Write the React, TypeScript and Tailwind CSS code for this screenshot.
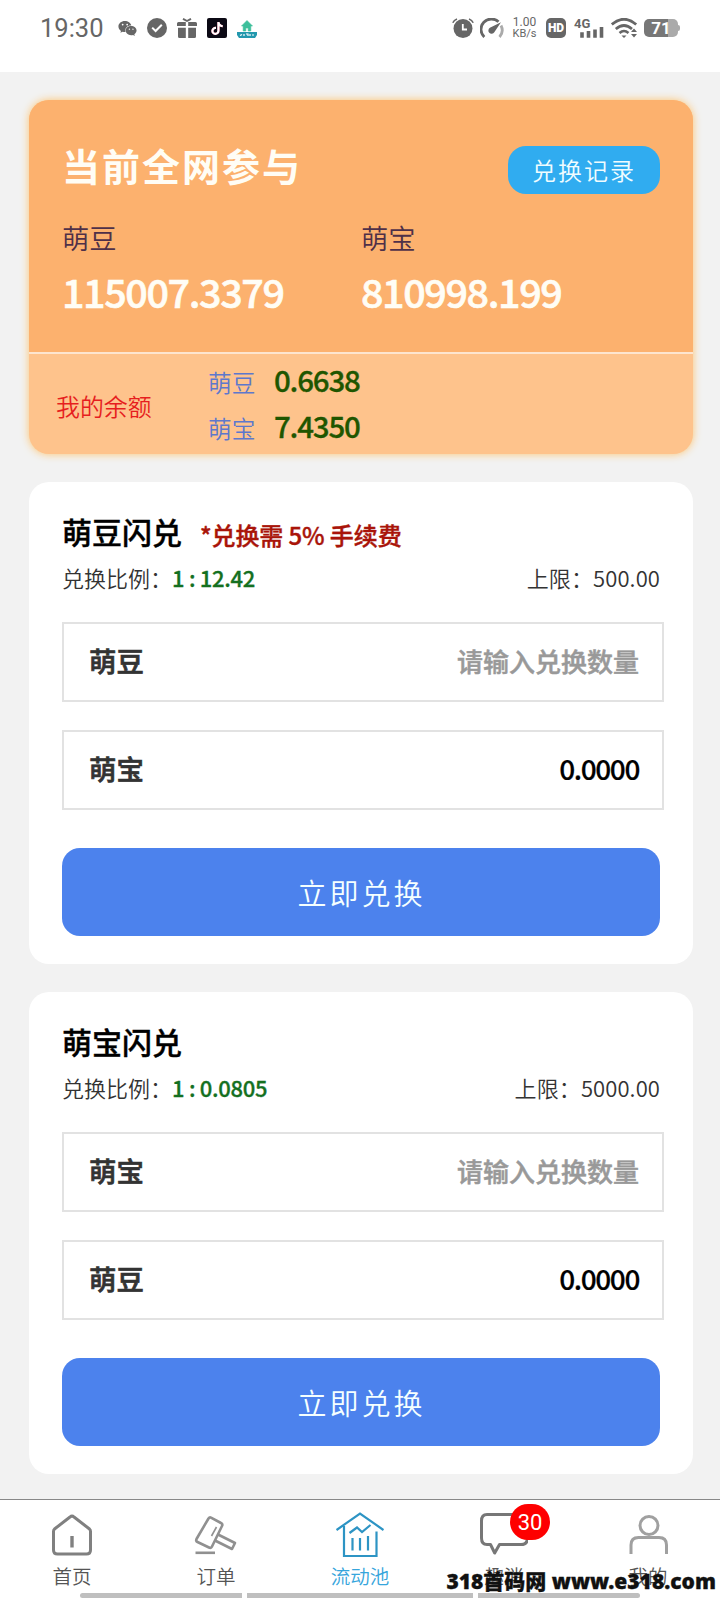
import { FaTiktok, FaWeixin } from "react-icons/fa";

type ExchangeProps = {
    title: string;
    notice?: string;
    ratio: string;
    limit: string;
    from: string;
    to: string;
};

const EXCHANGES: ExchangeProps[] = [
    { title: "萌豆闪兑", notice: "*兑换需 5% 手续费", ratio: "1 : 12.42", limit: "500.00", from: "萌豆", to: "萌宝" },
    { title: "萌宝闪兑", ratio: "1 : 0.0805", limit: "5000.00", from: "萌宝", to: "萌豆" },
];

function StatusBar() {
    return (
        <header className="flex h-[72px] items-start justify-between bg-white pt-[18px] pl-[39px] pr-[40px] text-[#666]">
            <div className="flex h-5 items-center">
                <span className="w-[79px] pl-px font-['Roboto'] text-[25.5px] leading-5">19:30</span>
                <FaWeixin className="h-[19px] w-[19px]" />
                <svg className="ml-[10px] h-5 w-5" viewBox="0 0 20 20">
                    <circle cx="10" cy="10" r="10" fill="#666" />
                    <path d="M5.2 9.6l3.4 3.4 6.2-6.2" fill="none" stroke="#fff" strokeWidth="2" />
                </svg>
                <svg className="ml-[10px] h-5 w-5" viewBox="0 0 20 20" fill="#666">
                    <path d="M0 5.5Q0 4 1.5 4h7.3v4H0zM11.2 4h7.3Q20 4 20 5.5V8h-8.8zM1 9.7h7.8V20H2.5Q1 20 1 18.5zM11.2 9.7H19v8.8q0 1.5-1.5 1.5h-6.3z" />
                    <path d="M6 .8L10 3l4-2.2" fill="none" stroke="#666" strokeWidth="1.9" />
                </svg>
                <span className="ml-[10px] flex h-5 w-5 items-center justify-center rounded-[2px] bg-[#0b0914]">
                    <FaTiktok className="h-[13px] w-[12px] text-white drop-shadow-[0.5px_0.5px_0_#e52f59]" />
                </span>
                <svg className="ml-[10px] h-5 w-5" viewBox="0 0 20 20">
                    <path d="M10 2.5L4.5 8h1.7v5h2.6v-3h2.4v3h2.6V8h1.7z" fill="#3dbf9b" stroke="#3dbf9b" strokeWidth=".6" />
                    <path d="M0 14h20v3l-2 3H2l-2-3z" fill="#2398ae" />
                    <path d="M3 17.5l2-1m2 1.5v-2m2 0h2v2m2-2v2m2-1h2" stroke="#fff" strokeWidth="1.2" fill="none" />
                </svg>
            </div>
            <div className="flex h-5 items-center">
                <svg className="h-5 w-[22px]" viewBox="0 0 22 20">
                    <circle cx="11" cy="10.5" r="9.5" fill="#666" />
                    <path d="M10.8 6v5.5H15" fill="none" stroke="#fff" strokeWidth="1.8" />
                    <path d="M.8 4.8Q2 2 5 .9M21.2 4.8Q20 2 17 .9" fill="none" stroke="#666" strokeWidth="1.6" />
                </svg>
                <svg className="ml-[6px] h-5 w-6" viewBox="0 0 24 20" fill="none">
                    <path d="M4.3 19A10.3 10.3 0 0 1 18.5 3.8" stroke="#666" strokeWidth="2.8" />
                    <path d="M21 7.5A10.3 10.3 0 0 1 19.5 19" stroke="#aaa" strokeWidth="2.8" />
                    <path d="M21 4.2L14.3 14.2a3.2 3.2 0 1 1-4.4-4.4z" fill="#666" />
                </svg>
                <span className="ml-[8px] flex w-[25px] flex-col items-center font-['Roboto'] text-[12px] leading-[11px]">
                    <span>1.00</span>
                    <span className="text-[11px]">KB/s</span>
                </span>
                <span className="ml-[9px] flex h-5 w-5 items-center justify-center rounded-[5px] bg-[#666] font-['Roboto'] text-[12px] font-black leading-none text-white">
                    HD
                </span>
                <span className="relative ml-[8px] h-5 w-[30px]">
                    <span className="absolute -top-px left-0 font-['Roboto'] text-[13px] font-bold leading-[13px]">4G</span>
                    <svg className="absolute inset-0 h-5 w-[30px]" viewBox="0 0 30 20">
                        <path d="M8 14.2v5.5M14.5 13v6.7M21 11.5v8.2M27.5 9v10.7" stroke="#666" strokeWidth="3.6" />
                    </svg>
                </span>
                <svg className="ml-[7px] h-5 w-[27px]" viewBox="0 0 27 20" fill="none" stroke="#666">
                    <path d="M.8 6.5Q13-4 25.2 6.5" strokeWidth="2.8" />
                    <path d="M4.8 11Q13 4 21 11" strokeWidth="2.7" />
                    <path d="M8.5 15Q13 11 17.5 15" strokeWidth="2.5" />
                    <path d="M10.5 17.5h5L13 20zM20 14l3-3.5 3 3.5zM20 16h6l-3 3.5z" fill="#666" stroke="none" />
                </svg>
                <span className="ml-[6px] flex h-[18px] w-[34px] items-center justify-center rounded-[5px] bg-[linear-gradient(90deg,#777_70%,#aaa_70%)] pt-px font-['Roboto'] text-[17px] font-bold leading-none text-white">
                    71
                </span>
                <span className="h-[6px] w-[2px] rounded-r bg-[#aaa]" />
            </div>
        </header>
    );
}

function PoolCard() {
    return (
        <section className="h-[354px] overflow-hidden rounded-[20px] bg-[#fec38c] shadow-[0_0_8px_#fdc46f]">
            <div className="h-[254px] border-b-2 border-[#fde5cf] bg-[#fcb16e] pl-[33px] pr-[33px] pt-[40px]">
                <div className="flex items-start justify-between">
                    <h1 className="text-[38px] font-bold leading-[50px] tracking-[2px] text-[#fffdf5]">当前全网参与</h1>
                    <button className="mt-[6px] h-12 w-[152px] rounded-[18px] bg-[#30acf0] text-[24px] font-[350] tracking-[2px] text-[#f0fcff]">
                        兑换记录
                    </button>
                </div>
                <div className="mt-[22px] grid grid-cols-2">
                    {[["萌豆", "115007.3379"], ["萌宝", "810998.199"]].map(([label, value]) => (
                        <div key={label}>
                            <div className="pt-px text-[27.3px] font-[350] leading-10 text-[#4f3048]">{label}</div>
                            <div className="mt-[4px] text-[39.5px] font-medium leading-[60px] tracking-[-1.4px] text-[#fffdf5] [-webkit-text-stroke:0.6px]">{value}</div>
                        </div>
                    ))}
                </div>
            </div>
            <div className="flex h-[100px] items-center pl-[27px]">
                <div className="w-[152px] pt-[3px] text-[23.9px] font-[350] text-[#e61e1e]">我的余额</div>
                <div className="flex flex-col">
                    {[["萌豆", "0.6638"], ["萌宝", "7.4350"]].map(([label, value]) => (
                        <div key={label} className="flex h-[46px] items-center">
                            <span className="w-[66px] pt-[3px] text-[23.7px] font-[350] text-[#5d78cc]">{label}</span>
                            <span className="pb-[3px] text-[29.5px] font-medium tracking-[-1.2px] text-[#1f5600] [-webkit-text-stroke:0.3px]">{value}</span>
                        </div>
                    ))}
                </div>
            </div>
        </section>
    );
}

function ExchangeCard({ title, notice, ratio, limit, from, to }: ExchangeProps) {
    return (
        <section className="h-[482px] rounded-[20px] bg-white pl-[33px] pr-[33px] pt-[27px]">
            <div className="flex h-11 items-center">
                <h2 className="text-[30px] font-medium text-black [-webkit-text-stroke:0.4px]">{title}</h2>
                {notice && (
                    <span className="ml-[18px] pt-[7px] text-[24px] font-medium tracking-[-0.1px] text-[#a91409] [-webkit-text-stroke:0.4px]">{notice}</span>
                )}
            </div>
            <div className="mt-[2px] flex h-11 items-center justify-between text-[22px] font-[350] text-[#333]">
                <div>
                    兑换比例：<span className="font-medium tracking-[-0.3px] text-[#14701f] [-webkit-text-stroke:0.3px]">{ratio}</span>
                </div>
                <div className="tracking-[0.1px]">上限：{limit}</div>
            </div>
            <div className="-mr-1 mt-[23px] flex h-20 items-center justify-between border-2 border-[#e2e2e2] pl-[25px] pr-[23px]">
                <span className="pb-[2px] text-[27.4px] font-medium text-[#333] [-webkit-text-stroke:0.7px]">{from}</span>
                <span className="pb-[3px] text-[26px] font-medium text-[#999] [-webkit-text-stroke:0.5px]">请输入兑换数量</span>
            </div>
            <div className="-mr-1 mt-7 flex h-20 items-center justify-between border-2 border-[#e2e2e2] pl-[25px] pr-[23px]">
                <span className="pb-[2px] text-[27.4px] font-medium text-[#333] [-webkit-text-stroke:0.7px]">{to}</span>
                <span className="pb-[5px] text-[28px] font-medium tracking-[-1.4px] text-black [-webkit-text-stroke:0.2px]">0.0000</span>
            </div>
            <button className="mt-[38px] h-[88px] w-full rounded-[18px] bg-[#4c82ed] pt-[2px] pl-px text-[29px] font-[350] tracking-[3px] text-[#f5ffff]">
                立即兑换
            </button>
        </section>
    );
}

function HomeIcon() {
    return (
        <svg className="h-12 w-12" viewBox="0 0 48 48" fill="none" stroke="#808080" strokeWidth="3" strokeLinejoin="round">
            <path d="M22 6q2-1.8 4 0l15.5 12q1 1 1 2.5V39q0 4-4 4h-29q-4 0-4-4V20.5Q5.5 19 6.500 18z" />
            <path d="M24 25v11.5" strokeWidth="3.4" />
        </svg>
    );
}

function OrderIcon() {
    return (
        <svg className="h-12 w-12" viewBox="0 0 48 48" fill="none" stroke="#909090" strokeWidth="2.6" strokeLinejoin="round">
            <path d="M16.500 7.500q1-1.500 2.500-.9L29 12q2 1 1 3L20 35.500q-1 2-3 1L5.500 31q-2-1-1-3z" />
            <path d="M26 23.500l17 8.500-3 6-17-8.500" />
            <path d="M24.500 16l-5 9" strokeWidth="1.6" />
            <path d="M3.500 41.800H23" />
        </svg>
    );
}

function PoolIcon() {
    return (
        <svg className="h-12 w-12" viewBox="0 0 48 48" fill="none" stroke="#2d94c4" strokeWidth="2.2">
            <path d="M.5 19L24 2.500 47.500 19M8 15v30h32.500V20.500" />
            <path d="M13.500 22L21 16.500l5 4.500 8.500-7M16.500 27v12.500M24 27v12.500M32 25v14.500" />
        </svg>
    );
}

function ChatIcon() {
    return (
        <svg className="h-12 w-12" viewBox="0 0 48 48" fill="none" stroke="#777" strokeWidth="3" strokeLinejoin="round">
            <path d="M7 3.500h34q6.500 0 6.500 6.500v17q0 6.500-6.500 6.500H19.500L14.700 42l-4.200-8.500H7Q1.500 33.500 1.500 27V10Q1.500 3.500 7 3.500z" />
        </svg>
    );
}

function ProfileIcon() {
    return (
        <svg className="h-12 w-12" viewBox="0 0 48 48" fill="none" stroke="#a0a0a0" strokeWidth="3">
            <circle cx="25" cy="14.500" r="9" />
            <path d="M7 43v-9q0-7.500 7.500-7.500h20.500q7.500 0 7.500 7.500v9" />
        </svg>
    );
}

const TABS = [
    { label: "首页", icon: HomeIcon },
    { label: "订单", icon: OrderIcon },
    { label: "流动池", icon: PoolIcon, active: true },
    { label: "趣消", icon: ChatIcon, badge: 30 },
    { label: "我的", icon: ProfileIcon },
];

function TabBar() {
    return (
        <nav className="relative mt-[25px] grid h-[101px] grid-cols-5 border-t border-[#888] bg-white">
            {TABS.map(({ label, icon: Icon, active, badge }) => (
                <div key={label} className="relative flex flex-col items-center pt-[11px]">
                    <Icon />
                    <span className={`mt-[3px] text-[19.5px] font-[350] leading-7 ${active ? "text-[#36a5dc]" : "text-[#555]"}`}>{label}</span>
                    {badge && (
                        <span className="absolute left-[78px] top-1 flex h-9 w-10 items-center justify-center rounded-full bg-[#fe0000] font-['Roboto'] text-[22px] text-white">
                            {badge}
                        </span>
                    )}
                </div>
            ))}
            {/* gesture bar */}
            <div className="absolute left-[80px] top-[93px] flex gap-[5px]">
                <span className="h-[5px] w-[162px] rounded-l-full bg-[#bfbfbf]" />
                <span className="h-[5px] w-[226px] bg-[#bfbfbf]" />
                <span className="h-[5px] w-[162px] rounded-r-full bg-[#bfbfbf]" />
            </div>
            <div className="absolute right-[4px] top-[65px] whitespace-nowrap font-['Noto_Sans','Noto_Sans_CJK_SC',sans-serif] text-[21px] font-black leading-8 text-[#111] [-webkit-text-stroke:0.3px]">
                318首码网 www.e318.com
            </div>
        </nav>
    );
}

export default function App() {
    return (
        <div className="h-[1600px] w-[720px] overflow-hidden bg-[#f2f2f2] font-['Noto_Sans_CJK_SC',sans-serif]">
            <StatusBar />
            <main className="flex flex-col gap-7 pl-[29px] pr-[27px] pt-7">
                <PoolCard />
                {EXCHANGES.map((item) => (
                    <ExchangeCard key={item.title} {...item} />
                ))}
            </main>
            <TabBar />
        </div>
    );
}
